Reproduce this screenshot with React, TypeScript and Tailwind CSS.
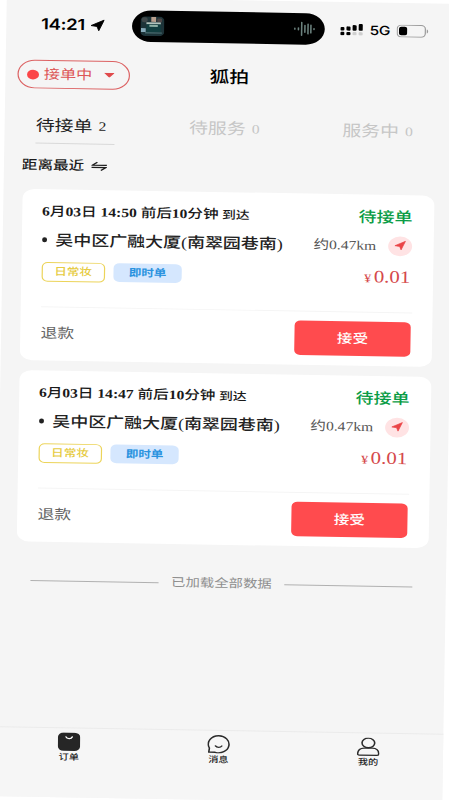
import clsx from "clsx";

const tabs = [
    { label: "待接单", count: 2, active: true },
    { label: "待服务", count: 0, active: false },
    { label: "服务中", count: 0, active: false },
];

const orders = [
    { id: 1, time: "6月03日 14:50 前后10分钟", address: "吴中区广融大厦(南翠园巷南)" },
    { id: 2, time: "6月03日 14:47 前后10分钟", address: "吴中区广融大厦(南翠园巷南)" },
];

function LocationArrow({ className }: { className?: string }) {
    return (
        <svg viewBox="0 0 24 24" className={className} fill="currentColor" stroke="currentColor" strokeWidth="1.5" strokeLinejoin="round">
            <path d="M22.5 1.5 1.5 12.5l9.5 1.7 3 8.3z" />
        </svg>
    );
}

function StatusBar() {
    return (
        <div className="flex h-14 items-center pl-[29px] font-['Inter',sans-serif] text-black">
            <span className="w-[40.5px] text-[15.5px] font-semibold leading-5 tracking-[-0.3px]">14:21</span>
            <LocationArrow className="h-[14px] w-[12.5px]" />

            <div className="ml-[23px] flex h-[31.5px] w-[161px] shrink-0 items-center justify-between rounded-full bg-black pl-[7px] pr-[8px]">
                <svg viewBox="0 0 20 20" className="h-5 w-5">
                    <rect width="20" height="20" rx="4.5" fill="#1d3338" />
                    <rect x="1" y="1" width="5" height="5" rx="2" fill="#40484a" />
                    <rect x="9" y="0.5" width="4" height="5" fill="#b99f8d" />
                    <rect x="14" y="2" width="4" height="4" rx="1" fill="#4b4545" />
                    <rect x="5" y="6" width="12" height="2" fill="#b3c4bd" />
                    <rect x="5" y="8" width="12" height="8" fill="#123f40" />
                    <rect x="7.5" y="8.5" width="7" height="2" fill="#8fb1a6" />
                    <rect x="0.5" y="12" width="4" height="4" fill="#85a9b8" />
                    <rect x="4" y="16" width="14" height="1.5" fill="#44666a" />
                </svg>
                <svg viewBox="0 0 18 16" className="h-4 w-[18px]" stroke="#6c827e" strokeWidth="1.3" strokeLinecap="round">
                    <path d="M1 7.5v1M4 7v2M6.7 1.5v13M9.4 4.5v7M12 3v10M14.4 4v8M17 7.5v1" />
                </svg>
            </div>

            <svg viewBox="0 0 19 12" className="ml-[12.5px] h-3 w-[19px] shrink-0">
                <rect x="0" y="3.5" width="3.4" height="3.5" rx="1" />
                <rect x="5.1" y="2.7" width="3.4" height="4.3" rx="1" />
                <rect x="10.2" y="1.3" width="3.4" height="5.7" rx="1" />
                <rect x="15.3" y="0" width="3.4" height="7" rx="1" />
                <rect x="0" y="8.3" width="3.4" height="3.4" rx="1" />
                <rect x="5.1" y="8.3" width="3.4" height="3.4" rx="1" />
                <rect x="10.2" y="8.3" width="3.4" height="3.4" rx="1" fill="#cfcfcf" />
                <rect x="15.3" y="8.3" width="3.4" height="3.4" rx="1" fill="#cfcfcf" />
            </svg>
            <span className="ml-1.5 w-[22px] text-[13px] font-medium leading-5 tracking-[-0.3px]">5G</span>
            <svg viewBox="0 0 27 13" className="h-[13px] w-[27px] shrink-0" fill="none">
                <rect x="0.5" y="0.5" width="23.5" height="12" rx="3.6" stroke="#9a9a9a" />
                <rect x="2" y="2.2" width="6.8" height="8.6" rx="2" fill="#000" />
                <path d="M25.2 4.5c1.5.5 1.5 3.5 0 4z" fill="#9a9a9a" />
            </svg>
        </div>
    );
}

function Header() {
    return (
        <div className="grid h-[45px] grid-cols-3 items-center pl-[10px] pr-[11px]">
            <div className="flex h-[28.5px] w-[94px] items-center rounded-full border border-[#dc6263] pl-[6.5px]">
                <span className="h-[10px] w-[10px] rounded-full bg-[#fb4648]" />
                <span className="ml-[4.5px] text-[13.5px] leading-5 text-[#dd5557]">接单中</span>
                <svg viewBox="0 0 10 5" className="ml-[9px] h-[4.5px] w-[9.5px]" fill="#e04a4c">
                    <path d="M0 0h10L5.8 4.6a1 1 0 0 1-1.6 0z" />
                </svg>
            </div>
            <h1 className="text-center text-[16.5px] font-medium leading-6 text-black">狐拍</h1>
        </div>
    );
}

// digits are bold, the characters around them one step lighter
function OrderTime({ time }: { time: string }) {
    return (
        <span className="whitespace-pre">
            {time.split(/([\d:]+)/).map((part, i) => (
                <span key={i} className={i % 2 ? "font-bold" : "font-medium"}>
                    {part}
                </span>
            ))}
        </span>
    );
}

function OrderCard({ time, address }: { time: string; address: string }) {
    return (
        <div className="h-[174px] rounded-[10px] bg-white px-[17px] pt-[13px]">
            <div className="flex h-5 items-center justify-between">
                <div className="flex items-center whitespace-nowrap text-[13px] leading-5 text-[#1a1a1a]">
                    <OrderTime time={time} />
                    <span className="ml-[3px] text-[11.5px] font-medium">到达</span>
                </div>
                <span className="mr-[0.5px] text-[15px] font-medium leading-5 text-[#0a9c45]">待接单</span>
            </div>

            <div className="mt-[7px] flex h-6 items-center whitespace-nowrap">
                <span className="h-[4.5px] w-[4.5px] rounded-full bg-[#222]" />
                <span className="ml-[7px] text-[15px] font-medium leading-6 text-[#222]">{address}</span>
                <span className="ml-auto text-[13px] leading-6 text-[#555]">约0.47km</span>
                <span className="mr-[0.5px] ml-[10px] flex h-5 w-5 items-center justify-center rounded-full bg-[#ffe3e4]">
                    <LocationArrow className="h-[10.5px] w-[10px] text-[#ea4547]" />
                </span>
            </div>

            <div className="mt-[10px] flex h-5 items-center">
                <span className="flex h-5 w-[53.5px] items-center justify-center rounded-[5px] border-[1.5px] border-[#ecd45a] text-[10.5px] font-medium leading-4 text-[#e6cb42]">
                    日常妆
                </span>
                <span className="ml-[7px] flex h-[19.5px] w-[57px] items-center justify-center rounded-[5px] bg-[#d5e7fe] text-[10.5px] font-bold leading-4 text-[#2b93df]">
                    即时单
                </span>
                <span className="mr-[1.5px] ml-auto flex items-baseline text-[#d5494b]">
                    <span className="mr-[2px] text-[12px] leading-5">¥</span>
                    <span className="text-[17.5px] leading-5">0.01</span>
                </span>
            </div>

            <div className="mt-[25px] flex h-[55px] items-center justify-between border-t border-[#f5f5f5]">
                <span className="ml-[0.5px] text-[14px] leading-5 text-[#666]">退款</span>
                <button className="mr-[0.5px] h-[34.5px] w-[97px] rounded-[5px] bg-[#ff4b4e] text-[13px] font-medium leading-5 text-white">
                    接受
                </button>
            </div>
        </div>
    );
}

function TabBar() {
    return (
        <div className="mt-auto grid h-[71.5px] grid-cols-3 border-t border-[#ebebeb] bg-[#f6f6f6] pt-[4.5px] text-center text-[8.5px] font-medium leading-3 text-[#222]">
            <div>
                <svg viewBox="0 0 20 20" className="mx-auto h-[19px] w-[19px]" fill="none">
                    <rect x="0.2" y="0.2" width="19.6" height="19.6" rx="5" fill="#262626" />
                    <path d="M7.3 4.8c.8 2.4 4.6 2.4 5.4 0" stroke="#fff" strokeWidth="1.4" strokeLinecap="round" />
                </svg>
                <div>订单</div>
            </div>
            <div>
                <svg viewBox="0 0 20 20" className="mx-auto h-[19px] w-[19px]" fill="none" stroke="#2b2b2b" strokeWidth="1.4" strokeLinecap="round" strokeLinejoin="round">
                    <path d="M10 .9a9.1 9.1 0 1 1-3 17.7H1.4l.5-4.4A9.1 9.1 0 0 1 10 .9z" />
                    <path d="M7.2 11.8c1.2 2 4.4 2 5.6 0" />
                </svg>
                <div>消息</div>
            </div>
            <div>
                <svg viewBox="0 0 20 20" className="mx-auto h-[19px] w-[19px]" fill="none" stroke="#2b2b2b" strokeWidth="1.4" strokeLinejoin="round">
                    <ellipse cx="10" cy="5.9" rx="5.6" ry="5.1" />
                    <path d="M6.5 11.4h7c3.3 0 5.6 2.3 5.8 5.9 0 1-.5 1.7-1.5 1.7H2.2c-1 0-1.6-.7-1.5-1.7.2-3.6 2.5-5.9 5.8-5.9z" />
                </svg>
                <div>我的</div>
            </div>
        </div>
    );
}

export default function App() {
    return (
        <div className="flex h-[800px] w-[449px] items-center justify-center overflow-hidden bg-white">
            <div className="flex h-[812px] w-[375px] shrink-0 rotate-[0.97deg] scale-x-[1.1973] scale-y-[0.9852] flex-col bg-[#f5f5f5] font-['Liberation_Serif','Noto_Sans_CJK_SC',sans-serif]">
                <StatusBar />
                <Header />

                <div className="mt-[13px] flex h-[35px] pl-[26px]">
                    {tabs.map((tab) => (
                        <div key={tab.label} className="w-[128px] shrink-0">
                            <div
                                className={clsx(
                                    "flex h-[35px] w-[66px] items-center whitespace-nowrap border-b text-[15.8px] leading-5",
                                    tab.active ? "border-[#d9d9d9] text-[#222]" : "border-transparent text-[#c6c6c6]"
                                )}
                            >
                                {tab.label}
                                <span className="ml-[5px] text-[13px]">{tab.count}</span>
                            </div>
                        </div>
                    ))}
                </div>

                <div className="flex h-[43px] items-center pl-[15px] text-[13px] font-medium leading-5 text-[#1c1c1c]">
                    距离最近
                    <svg viewBox="0 0 13 10" className="ml-[5.5px] h-[10px] w-[13px]" fill="none" stroke="#1c1c1c" strokeWidth="1.3">
                        <path d="M5 .8 1 3.8h12M0 6.3h12L8 9.3" />
                    </svg>
                </div>

                <div className="mt-[2.6px] flex flex-col gap-[10px] pl-[15.5px] pr-[15.5px]">
                    {orders.map((order) => (
                        <OrderCard key={order.id} time={order.time} address={order.address} />
                    ))}
                </div>

                <div className="mt-[29.5px] flex h-5 items-center gap-[10.5px] px-[28px] text-[12px] leading-5 text-[#8f8f8f]">
                    <div className="h-px flex-1 bg-[#b0b0b0]" />
                    已加载全部数据
                    <div className="h-px flex-1 bg-[#b0b0b0]" />
                </div>

                <TabBar />
            </div>
        </div>
    );
}
